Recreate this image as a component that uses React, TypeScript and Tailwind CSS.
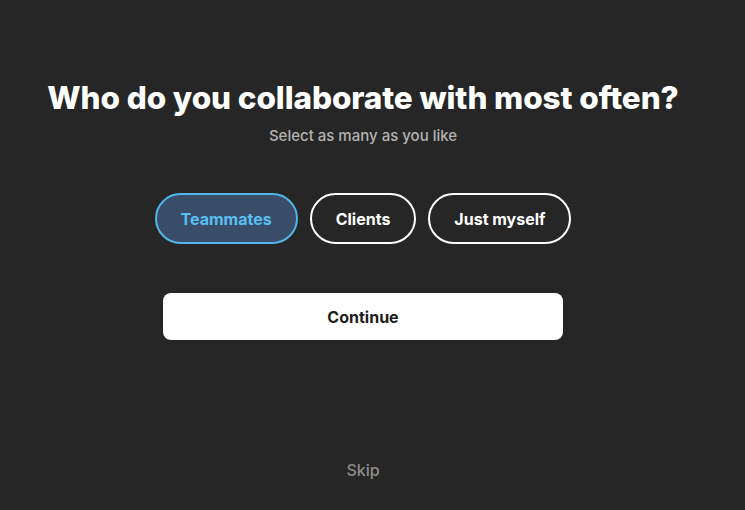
import React, { useState } from "react";

const OPTIONS = ["Teammates", "Clients", "Just myself"];

export default function App() {
  const [selected, setSelected] = useState<string[]>(["Teammates"]);

  const toggle = (name: string) =>
    setSelected((s) => (s.includes(name) ? s.filter((x) => x !== name) : [...s, name]));

  return (
    <div
      className="min-h-[510px] w-full bg-[#262626] pr-[19px] flex flex-col items-center"
      style={{ fontFamily: "Inter, 'Noto Sans', sans-serif" }}
    >
      <h1 className="mt-[78px] text-[31.5px] leading-[40px] font-extrabold text-white whitespace-nowrap tracking-[-0.1px]">
        Who do you collaborate with most often?
      </h1>
      <p className="mt-[8px] text-[15px] leading-[20px] font-medium text-[#b3b3b3]">
        Select as many as you like
      </p>

      <div className="mt-[47px] flex gap-3">
        {OPTIONS.map((o) => {
          const on = selected.includes(o);
          return (
            <button
              key={o}
              type="button"
              onClick={() => toggle(o)}
              className={`h-[51px] px-[24px] rounded-full border-2 text-[16px] font-bold ${
                on ? "border-[#4fb6ea] bg-[#3a4d68] text-[#59bff0]" : "border-white text-white"
              }`}
            >
              {o}
            </button>
          );
        })}
      </div>

      <button
        type="button"
        className="mt-[49px] w-[400px] h-[47px] rounded-lg bg-white text-[16px] font-bold text-[#1c1c1c]"
      >
        Continue
      </button>

      <button type="button" className="mt-[118px] text-[16px] leading-[24px] font-medium text-[#8c8c8c]">
        Skip
      </button>
    </div>
  );
}
